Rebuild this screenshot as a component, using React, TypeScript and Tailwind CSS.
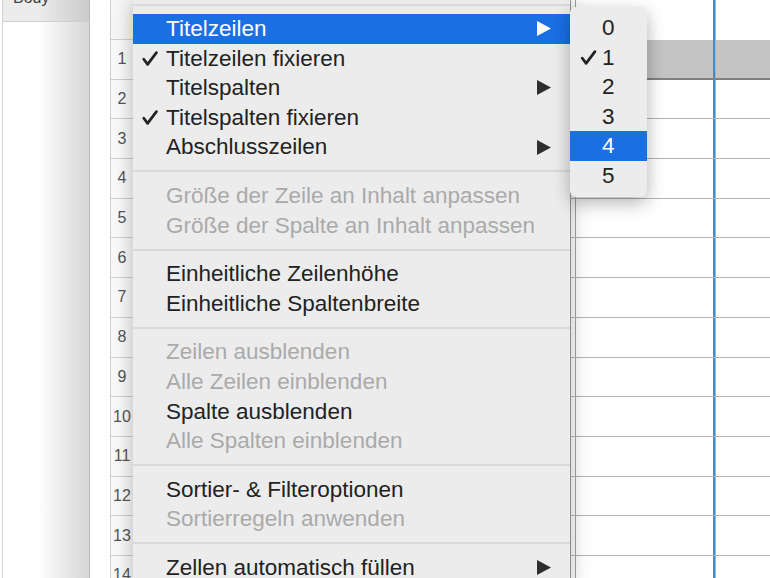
type Item =
  | { sep: true }
  | { sep?: false; label: string; check?: boolean; arrow?: boolean; disabled?: boolean; active?: boolean };

const MENU: Item[] = [
  { sep: true },
  { label: "Titelzeilen", arrow: true, active: true },
  { label: "Titelzeilen fixieren", check: true },
  { label: "Titelspalten", arrow: true },
  { label: "Titelspalten fixieren", check: true },
  { label: "Abschlusszeilen", arrow: true },
  { sep: true },
  { label: "Größe der Zeile an Inhalt anpassen", disabled: true },
  { label: "Größe der Spalte an Inhalt anpassen", disabled: true },
  { sep: true },
  { label: "Einheitliche Zeilenhöhe" },
  { label: "Einheitliche Spaltenbreite" },
  { sep: true },
  { label: "Zeilen ausblenden", disabled: true },
  { label: "Alle Zeilen einblenden", disabled: true },
  { label: "Spalte ausblenden" },
  { label: "Alle Spalten einblenden", disabled: true },
  { sep: true },
  { label: "Sortier- & Filteroptionen" },
  { label: "Sortierregeln anwenden", disabled: true },
  { sep: true },
  { label: "Zellen automatisch füllen", arrow: true },
];

const ROWS = Array.from({ length: 14 }, (_, i) => i + 1);

function Check({ className }: { className?: string }) {
  return (
    <svg className={className} viewBox="0 0 16 15" fill="none" stroke="currentColor" strokeWidth="2.7" strokeLinecap="round" strokeLinejoin="round">
      <path d="M1.8 8.2 L5.6 13.4 L14.4 1.6" />
    </svg>
  );
}

function Arrow({ className }: { className?: string }) {
  return (
    <svg className={className} viewBox="0 0 14 15" fill="currentColor">
      <polygon points="0,0 14,7.5 0,15" />
    </svg>
  );
}

function Columns() {
  return (
    <>
      <div className="w-[437px] shrink-0" />
      <div className="w-[6px] shrink-0 border-x border-[#a3a3a3]" />
      <div className="w-[137px] shrink-0" />
      <div className="w-[2px] shrink-0 bg-[#2f93e0]" />
      <div className="w-[1px] shrink-0 bg-[#b0b0b0]" />
      <div className="flex-1" />
    </>
  );
}

function SheetRow({ n }: { n: number }) {
  const header = n === 1;
  return (
    <div className="flex h-[39.7px] shrink-0">
      <div className="flex w-[23px] shrink-0 items-center justify-center border-b border-l border-[#d0d0d0] bg-[#fafafa] text-[16px] text-[#555]">
        {n}
      </div>
      <div className={`flex flex-1 ${header ? "border-b-2 border-[#808080] bg-[#c4c4c4]" : "border-b border-[#b4b4b4]"}`}>
        <Columns />
      </div>
    </div>
  );
}

export default function App() {
  return (
    <div className="relative flex h-[578px] w-[770px] overflow-hidden bg-white font-['Liberation_Sans',Arial,sans-serif]">
      {/* sidebar */}
      <div className="ml-[2px] flex w-[88px] shrink-0 flex-col border-l border-r border-[#d3d3d3] border-r-[#bdbdbd] bg-gradient-to-r from-white from-40% to-[#d6d6d6]">
        <div className="h-[22px] shrink-0 overflow-hidden border-b border-[#cdcdcd] bg-gradient-to-r from-[#ececec] from-40% to-[#cbcbcb]">
          <div className="mt-[-10px] pl-[10px] text-[16px] leading-[16px] text-[#444]">Body</div>
        </div>
      </div>
      <div className="w-[20px] shrink-0" />

      {/* sheet */}
      <div className="flex flex-1 flex-col">
        <div className="flex h-[40px] shrink-0">
          <div className="w-[23px] shrink-0 border-b border-l border-[#d0d0d0] bg-[#f7f7f7]" />
          <div className="flex flex-1">
            <Columns />
          </div>
        </div>
        {ROWS.map((n) => (
          <SheetRow key={n} n={n} />
        ))}
      </div>

      {/* context menu */}
      <div className="absolute left-[133px] top-[-5px] w-[437px] bg-[#ececec] text-[22.5px] shadow-[0_6px_20px_rgba(0,0,0,0.28)]">
        {MENU.map((it, i) =>
          it.sep ? (
            <div key={i} className="flex h-[19px] items-center">
              <div className="h-[2px] w-full bg-[#d9d9d9]" />
            </div>
          ) : (
            <div
              key={i}
              className={`relative flex h-[29.6px] items-center pl-[33px] pr-[19px] leading-[29.6px] ${
                it.active ? "bg-[#1a6fe3] text-white" : it.disabled ? "text-[#aaaaaa]" : "text-[#222222]"
              }`}
            >
              {it.check && <Check className="absolute left-[9px] top-[7px] h-[15px] w-[16px]" />}
              <span className="flex-1 whitespace-nowrap">{it.label}</span>
              {it.arrow && <Arrow className={`h-[15px] w-[14px] ${it.active ? "text-white" : "text-[#2e2e2e]"}`} />}
            </div>
          )
        )}
      </div>

      {/* submenu */}
      <div className="absolute left-[570px] top-[7px] w-[77px] rounded-[6px] bg-[#ececec] py-[6px] text-[22.5px] text-[#222222] shadow-[0_6px_18px_rgba(0,0,0,0.3)]">
        {["0", "1", "2", "3", "4", "5"].map((d) => (
          <div
            key={d}
            className={`relative h-[29.6px] pl-[32px] leading-[29.6px] ${d === "4" ? "bg-[#1a6fe3] text-white" : ""}`}
          >
            {d === "1" && <Check className="absolute left-[10px] top-[7px] h-[15px] w-[17px]" />}
            {d}
          </div>
        ))}
      </div>
    </div>
  );
}
